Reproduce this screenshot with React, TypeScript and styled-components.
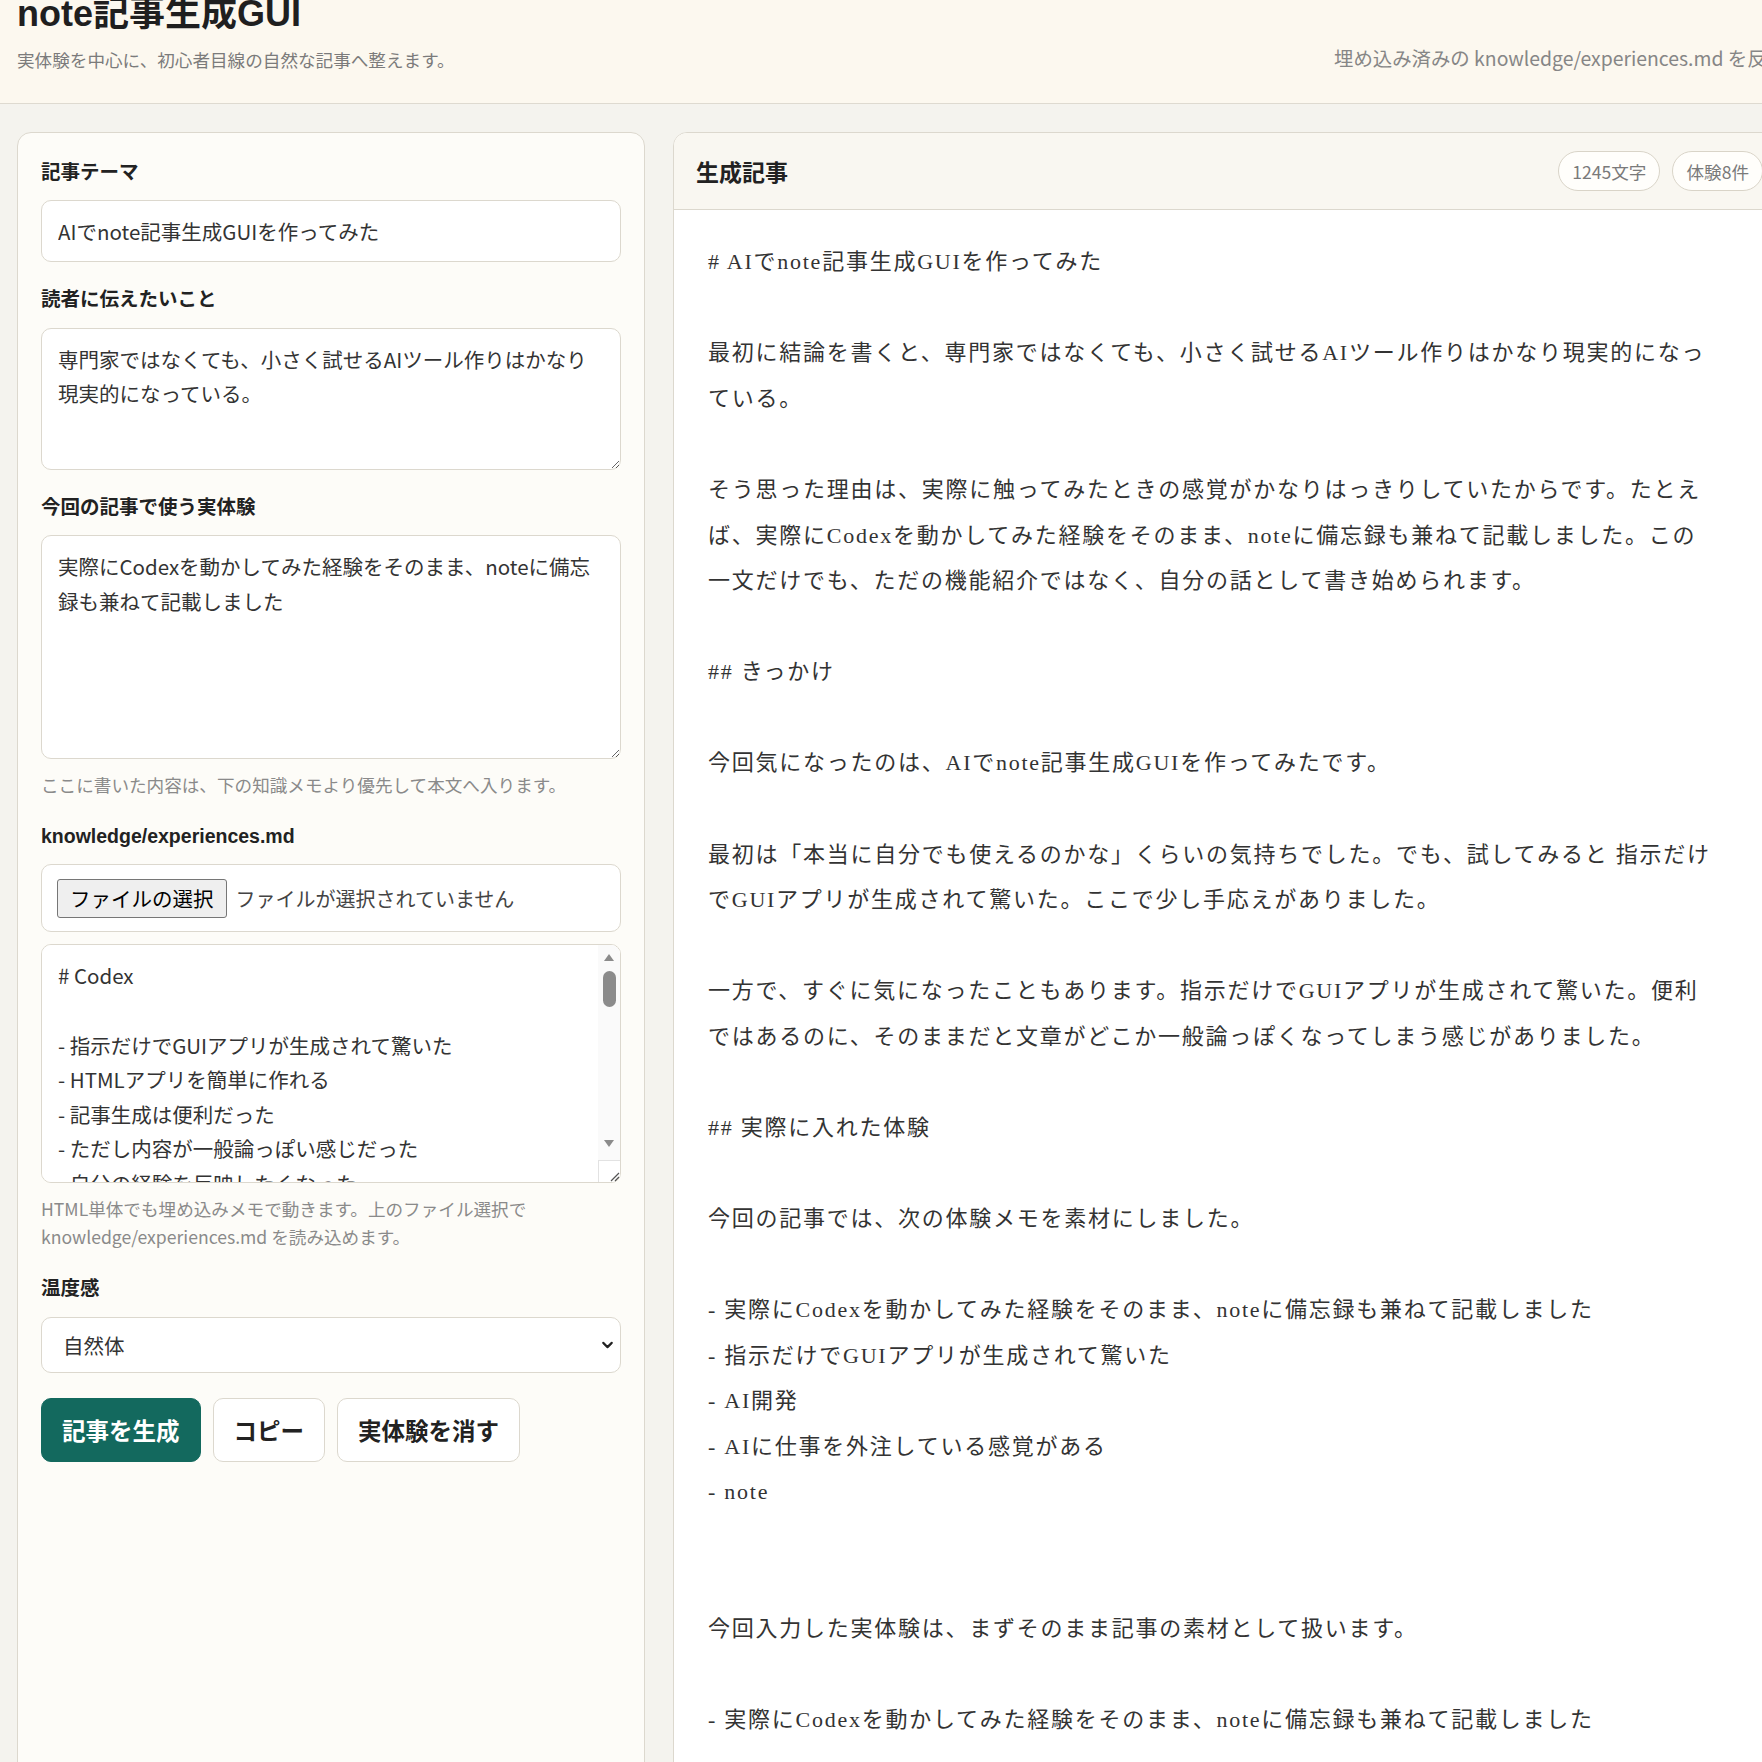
import { FC } from "react";
import styled, { createGlobalStyle, css } from "styled-components";
import { ChevronDown } from "lucide-react";

const GlobalStyle = createGlobalStyle`
  html, body {
    margin: 0;
    overflow: hidden;
    background: #f4f3ee;
  }

  * {
    box-sizing: border-box;
  }
`;

const uiFont = `"Noto Sans CJK JP", "Noto Sans", sans-serif`;

const Page = styled.div`
  width: 1803px;
  margin-top: -8px;
  font-family: ${uiFont};
  color: #222;
`;

const Header = styled.header`
  display: grid;
  grid-template-columns: 1fr auto;
  align-items: end;
  padding: 0 17px 29px;
  background: #fcf8ef;
  border-bottom: 1px solid #dedad0;
`;

const Title = styled.h1`
  margin: 0;
  font-family: "Liberation Sans", "Noto Sans CJK JP", sans-serif;
  font-size: 36px;
  line-height: 1.2;
  font-weight: 700;
  color: #1f1f1f;
`;

const Lead = styled.p`
  margin: 11px 0 0;
  font-size: 17.6px;
  line-height: 28px;
  color: #7b7b7b;
`;

const SourceNote = styled.p`
  margin: 0 0 2px;
  font-size: 19.4px;
  line-height: 28px;
  color: #868686;
  white-space: nowrap;
`;

const Main = styled.main`
  display: grid;
  grid-template-columns: 628px 1fr;
  gap: 28px;
  padding: 28px 17px;
`;

const FormPanel = styled.section`
  display: flex;
  flex-direction: column;
  gap: 24px;
  padding: 26px 23px;
  background: #fdfcf8;
  border: 1px solid #dcd8ce;
  border-radius: 14px;
`;

const Field = styled.div`
  display: flex;
  flex-direction: column;
  gap: 12px;
`;

const Label = styled.label`
  margin-bottom: 2px;
  font-family: "Liberation Sans", "Noto Sans CJK JP", sans-serif;
  font-size: 19.5px;
  line-height: 1.4;
  font-weight: 700;
  color: #222;
`;

const control = css`
  width: 100%;
  background: #fff;
  border: 1px solid #dcd8ce;
  border-radius: 10px;
  font-family: ${uiFont};
  font-size: 20.5px;
  color: #333;
  outline: none;
`;

const TextInput = styled.input`
  ${control};
  height: 62px;
  padding: 0 16px;
`;

const TextArea = styled.textarea<{ $height: number }>`
  ${control};
  display: block;
  height: ${(p) => p.$height}px;
  padding: 13px 18px 13px 16px;
  line-height: 34.6px;
  resize: vertical;
`;

/* memo box: textarea plus a drawn scrollbar over its right edge */
const MemoWrap = styled.div`
  position: relative;
`;

const MemoArea = styled(TextArea)`
  padding-right: 40px;
  overflow-y: scroll;
  resize: none;
  scrollbar-width: none;
`;

const ScrollBar = styled.div`
  position: absolute;
  top: 1px;
  right: 1px;
  bottom: 23px;
  width: 22px;
  display: flex;
  flex-direction: column;
  align-items: center;
  padding: 9px 0 13px;
  background: #fafafa;
  border-top-right-radius: 9px;
  pointer-events: none;
`;

const Arrow = styled.span<{ $down?: boolean }>`
  width: 0;
  height: 0;
  border-left: 5px solid transparent;
  border-right: 5px solid transparent;
  ${(p) =>
    p.$down
      ? "border-top: 7px solid #8b8b8b; margin-top: auto;"
      : "border-bottom: 7px solid #8b8b8b;"}
`;

const Thumb = styled.span`
  width: 13px;
  height: 36px;
  margin-top: 10px;
  background: #8b8b8b;
  border-radius: 7px;
`;

const Corner = styled.span`
  position: absolute;
  right: 1px;
  bottom: 1px;
  width: 22px;
  height: 22px;
  display: flex;
  align-items: flex-end;
  justify-content: flex-end;
  background: #fff;
  border-top: 1px solid #e2e2e2;
  border-left: 1px solid #e2e2e2;
  border-bottom-right-radius: 9px;
  pointer-events: none;
`;

const Hint = styled.p`
  margin: 0;
  font-size: 17.6px;
  line-height: 28px;
  color: #8a8a8a;
`;

const FileBox = styled.label`
  display: flex;
  align-items: center;
  gap: 9px;
  height: 68px;
  padding: 0 15px;
  background: #fff;
  border: 1px solid #dcd8ce;
  border-radius: 10px;
  cursor: pointer;

  input {
    display: none;
  }
`;

const FileButton = styled.span`
  display: inline-flex;
  align-items: center;
  height: 39px;
  padding: 0 12px;
  background: #efefef;
  border: 1px solid #767676;
  border-radius: 3px;
  font-size: 20.5px;
  color: #000;
`;

const FileName = styled.span`
  font-size: 20px;
  color: #444;
`;

const SelectWrap = styled.div`
  position: relative;

  svg {
    position: absolute;
    right: 5px;
    top: 50%;
    transform: translateY(-50%);
    color: #222;
    pointer-events: none;
  }
`;

const Select = styled.select`
  ${control};
  appearance: none;
  height: 56px;
  padding: 0 40px 0 21px;
`;

const Actions = styled.div`
  display: flex;
  gap: 12px;
  margin-top: 1px;
`;

const Button = styled.button<{ $primary?: boolean }>`
  height: 64px;
  padding: 0 20px;
  border-radius: 10px;
  font-family: ${uiFont};
  font-size: 23.5px;
  font-weight: 700;
  cursor: pointer;
  background: ${(p) => (p.$primary ? "#13695e" : "#fff")};
  color: ${(p) => (p.$primary ? "#fff" : "#222")};
  border: 1px solid ${(p) => (p.$primary ? "#13695e" : "#dcd8ce")};
`;

const PreviewPanel = styled.section`
  display: flex;
  flex-direction: column;
  background: #fff;
  border: 1px solid #dcd8ce;
  border-radius: 14px;
  overflow: hidden;
`;

const PreviewHeader = styled.div`
  display: flex;
  align-items: center;
  justify-content: space-between;
  height: 77px;
  padding: 0 22px;
  background: #f9f7f1;
  border-bottom: 1px solid #dcd8ce;
`;

const PreviewTitle = styled.h2`
  margin: 0;
  font-size: 23px;
  font-weight: 700;
  color: #222;
`;

const Badges = styled.div`
  display: flex;
  gap: 12px;
`;

const Badge = styled.span`
  display: inline-flex;
  align-items: center;
  height: 40px;
  padding: 0 13px;
  background: #fffefb;
  border: 1px solid #d9d4c8;
  border-radius: 20px;
  font-size: 17.6px;
  color: #7a7a7a;
`;

const Article = styled.div`
  max-width: 1077px;
  padding: 29px 34px 40px;
  font-family: "Liberation Serif", "Noto Sans CJK JP", serif;
  font-size: 22px;
  letter-spacing: 1.75px;
  line-height: 45.56px;
  color: #333;
  white-space: pre-wrap;
`;

const memo = `# Codex

- 指示だけでGUIアプリが生成されて驚いた
- HTMLアプリを簡単に作れる
- 記事生成は便利だった
- ただし内容が一般論っぽい感じだった
- 自分の経験を反映したくなった

# AI開発

- AIに仕事を外注している感覚がある
- 小さく作って試すのが楽しい
- 指示の出し方で結果がかなり変わる
- 動くものがすぐ見られるのが嬉しい

# note

- 備忘録として残しておくと後で役立つ
- 実体験を書くと読まれやすい
- 初心者目線の文章を意識したい
- 書き出しで迷う時間を減らしたい

# これから

- 自分用のツールをもう少し増やしたい
- 記事の下書きを毎週作ってみる
- 体験メモを少しずつ貯めていく
- 使ってみた感想を次の記事にする
- 失敗したこともそのまま残す
`;

const article = `# AIでnote記事生成GUIを作ってみた

最初に結論を書くと、専門家ではなくても、小さく試せるAIツール作りはかなり現実的になっている。

そう思った理由は、実際に触ってみたときの感覚がかなりはっきりしていたからです。たとえば、実際にCodexを動かしてみた経験をそのまま、noteに備忘録も兼ねて記載しました。この一文だけでも、ただの機能紹介ではなく、自分の話として書き始められます。

## きっかけ

今回気になったのは、AIでnote記事生成GUIを作ってみたです。

最初は「本当に自分でも使えるのかな」くらいの気持ちでした。でも、試してみると 指示だけでGUIアプリが生成されて驚いた。ここで少し手応えがありました。

一方で、すぐに気になったこともあります。指示だけでGUIアプリが生成されて驚いた。便利ではあるのに、そのままだと文章がどこか一般論っぽくなってしまう感じがありました。

## 実際に入れた体験

今回の記事では、次の体験メモを素材にしました。

- 実際にCodexを動かしてみた経験をそのまま、noteに備忘録も兼ねて記載しました
- 指示だけでGUIアプリが生成されて驚いた
- AI開発
- AIに仕事を外注している感覚がある
- note


今回入力した実体験は、まずそのまま記事の素材として扱います。

- 実際にCodexを動かしてみた経験をそのまま、noteに備忘録も兼ねて記載しました

## やってみて分かったこと

いちばん大きかったのは、自分の体験を一行でも入れると文章の温度が変わることでした。`;

const App: FC = () => {
  return (
    <Page>
      <GlobalStyle />
      <Header>
        <div>
          <Title>note記事生成GUI</Title>
          <Lead>実体験を中心に、初心者目線の自然な記事へ整えます。</Lead>
        </div>
        <SourceNote>埋め込み済みの knowledge/experiences.md を反映</SourceNote>
      </Header>

      <Main>
        <FormPanel>
          <Field>
            <Label htmlFor="theme">記事テーマ</Label>
            <TextInput id="theme" defaultValue="AIでnote記事生成GUIを作ってみた" />
          </Field>

          <Field>
            <Label htmlFor="message">読者に伝えたいこと</Label>
            <TextArea
              id="message"
              $height={142}
              defaultValue="専門家ではなくても、小さく試せるAIツール作りはかなり現実的になっている。"
            />
          </Field>

          <Field>
            <Label htmlFor="experience">今回の記事で使う実体験</Label>
            <TextArea
              id="experience"
              $height={224}
              defaultValue="実際にCodexを動かしてみた経験をそのまま、noteに備忘録も兼ねて記載しました"
            />
            <Hint>ここに書いた内容は、下の知識メモより優先して本文へ入ります。</Hint>
          </Field>

          <Field>
            <Label htmlFor="memo">knowledge/experiences.md</Label>
            <FileBox>
              <input type="file" accept=".md,text/markdown" />
              <FileButton>ファイルの選択</FileButton>
              <FileName>ファイルが選択されていません</FileName>
            </FileBox>
            <MemoWrap>
              <MemoArea id="memo" $height={239} defaultValue={memo} />
              <ScrollBar>
                <Arrow />
                <Thumb />
                <Arrow $down />
              </ScrollBar>
              <Corner>
                <svg width="12" height="12" viewBox="0 0 12 12">
                  <path d="M11 3 L3 11 M11 7 L7 11" stroke="#555" strokeWidth="1.2" fill="none" />
                </svg>
              </Corner>
            </MemoWrap>
            <Hint>
              HTML単体でも埋め込みメモで動きます。上のファイル選択で knowledge/experiences.md を読み込めます。
            </Hint>
          </Field>

          <Field>
            <Label htmlFor="tone">温度感</Label>
            <SelectWrap>
              <Select id="tone" defaultValue="natural">
                <option value="natural">自然体</option>
                <option value="casual">くだけた感じ</option>
                <option value="polite">丁寧</option>
              </Select>
              <ChevronDown size={17} strokeWidth={3} />
            </SelectWrap>
          </Field>

          <Actions>
            <Button $primary>記事を生成</Button>
            <Button>コピー</Button>
            <Button>実体験を消す</Button>
          </Actions>
        </FormPanel>

        <PreviewPanel>
          <PreviewHeader>
            <PreviewTitle>生成記事</PreviewTitle>
            <Badges>
              <Badge>1245文字</Badge>
              <Badge>体験8件</Badge>
            </Badges>
          </PreviewHeader>
          <Article>{article}</Article>
        </PreviewPanel>
      </Main>
    </Page>
  );
};

export default App;
